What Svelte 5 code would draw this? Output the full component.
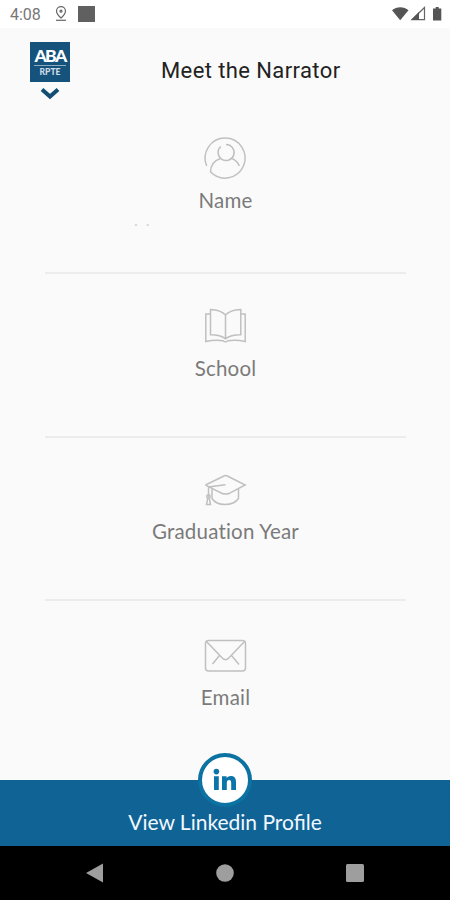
<script>
  let time = '4:08';

  const fields = [
    { id: 'name', label: 'Name', value: '. .' },
    { id: 'school', label: 'School', value: '' },
    { id: 'year', label: 'Graduation Year', value: '' },
    { id: 'email', label: 'Email', value: '' }
  ];
</script>

<div class="screen">
  <div class="status-bar">
    <span class="time">{time}</span>
    <svg class="pin" width="12" height="16" viewBox="0 0 12 16">
      <path d="M6 12C3.200 9.400 1.500 7.400 1.500 5.200a4.500 4.500 0 0 1 9 0C10.500 7.400 8.800 9.400 6 12z" />
      <circle cx="6" cy="5.200" r="1" />
      <path d="M1 14.300h10" />
    </svg>
    <span class="square"></span>
    <svg class="signals" width="50" height="16" viewBox="0 0 50 16">
      <path d="M0 4.200C4.500.3 12 .3 16.500 4.200L8.200 14.200z" />
      <path d="M32.500 1.500v12.200H20z" fill="none" stroke="#666" stroke-width="1.200" />
      <path d="M19 14L27 6v8z" />
      <path d="M41 2.500h2.700V1h3v1.500h2.600v12H41z" />
    </svg>
  </div>

  <header>
    <button class="logo" aria-label="Menu">
      <span class="logo-box">
        <span class="logo-top">ABA</span>
        <span class="logo-sub">RPTE</span>
      </span>
      <svg width="20" height="13" viewBox="0 0 20 13">
        <path d="M2 2.500l8 7 8-7" />
      </svg>
    </button>
    <h1>Meet the Narrator</h1>
  </header>

  <main>
    {#each fields as field}
      <section class={field.id}>
        <svg class="icon" width="42" height="42" viewBox="0 0 42 42">
          {#if field.id === 'name'}
            <path d="M2.700 29A20 20 0 1 1 6.500 34.800C6.800 28 10.500 23.500 16 21.700" />
            <path d="M16.800 9.500a8 8 0 1 0 5.200-2" />
            <path d="M28 21.500c3.500 1.500 6 4 7.300 7.500" />
          {:else if field.id === 'school'}
            <path d="M21.500 10C18.500 6.500 13 4.800 6.500 4.500v25.300C12.500 29.800 18 31 21.500 33.800 25 31 30.500 29.800 36.800 29.800V4.500C30.500 4.800 24.500 6.500 21.500 10zM21.500 10v23.800" />
            <path d="M6.500 9H1.800v27.500c6-1.300 12.500-1.600 17.200-.8q2.500 2.200 5 0c4.500-.8 11.500-.5 17.200.8V9h-4.400" />
          {:else if field.id === 'year'}
            <path d="M1.500 16L20.500 6.800q1.200-.5 2.400 0L41.200 16l-15.500 8.200q-4 1.800-8 0L5 17.800 1.500 16M21.500 15.800L4.500 18v10.500" />
            <path d="M8 20v9.500c5 8 21 8 26.500 0V20" />
            <circle cx="4.500" cy="27.500" r="1.700" />
            <path d="M3.800 29L2.500 35.500h4L5.200 29" />
          {:else}
            <rect x="1.500" y="5.500" width="40" height="30.500" rx="3" />
            <path d="M2.500 6.500L18.500 23.300q3 2.800 6 0L40.500 6.500M15.500 20.500L8.500 29M27.500 20.500l7.500 9" />
          {/if}
        </svg>
        <h2>{field.label}</h2>
        {#if field.value}
          <p>{field.value}</p>
        {/if}
      </section>
    {/each}
  </main>

  <footer>
    <div class="badge">
      <svg width="24" height="24" viewBox="0 0 24 24">
        <circle cx="3.400" cy="3.600" r="2.800" />
        <path d="M1 8.200h4.800v13.800H1zM9 8.200h4.600v1.900c1-1.500 2.500-2.200 4.300-2.200 3.800 0 5.100 2.400 5.100 6.200V22h-4.800v-7c0-1.900-.5-3-2-3-1.700 0-2.400 1.200-2.400 3v7H9z" />
      </svg>
    </div>
    <span>View Linkedin Profile</span>
  </footer>

  <nav>
    <svg width="20" height="20" viewBox="0 0 20 20"><path d="M18 .5v19L1 10z" /></svg>
    <svg width="18" height="18" viewBox="0 0 18 18"><circle cx="9" cy="9" r="8.800" /></svg>
    <svg width="20" height="20" viewBox="0 0 20 20"><rect x="1" y="1" width="18" height="18" rx="1.500" /></svg>
  </nav>
</div>

<style>
  :global(body) {
    margin: 0;
  }
  .screen {
    display: flex;
    flex-direction: column;
    width: 450px;
    height: 900px;
    overflow: hidden;
    background: #fafafa;
    font-family: Lato, sans-serif;
  }
  .status-bar {
    display: flex;
    align-items: center;
    box-sizing: border-box;
    height: 28px;
    padding: 0 8px 0 10px;
    background: #fff;
    color: #777;
    font-family: Roboto, sans-serif;
  }
  .time {
    width: 45px;
    font-size: 16px;
    line-height: 28px;
    padding-top: 2px;
  }
  .pin {
    fill: none;
    stroke: #666;
    stroke-width: 1.2;
  }
  .square {
    width: 17px;
    height: 16px;
    margin-left: 11px;
    background: #606060;
  }
  .signals {
    margin-left: auto;
    fill: #555;
  }
  header {
    display: flex;
    height: 78px;
  }
  .logo {
    display: flex;
    flex-direction: column;
    align-items: center;
    width: 40px;
    margin: 14px 0 0 30px;
    padding: 0;
    border: none;
    background: none;
  }
  .logo svg {
    margin-top: 5px;
    fill: none;
    stroke: #124e74;
    stroke-width: 4;
  }
  .logo-box {
    display: flex;
    flex-direction: column;
    align-items: center;
    width: 40px;
    height: 40px;
    background: #15537c;
    color: #fff;
    font-family: Lato, sans-serif;
    font-weight: 900;
  }
  .logo-top {
    width: 32px;
    height: 16px;
    margin-top: 7px;
    border-bottom: 1px solid #8eabc0;
    font-size: 17.5px;
    line-height: 14px;
    letter-spacing: -1.6px;
    text-align: center;
  }
  .logo-sub {
    margin-top: 1px;
    font-size: 8.5px;
    line-height: 10px;
    color: #cfdde7;
  }
  h1 {
    margin: 30px 0 0 91px;
    color: #222;
    font-family: Roboto, sans-serif;
    font-size: 22px;
    font-weight: 400;
    line-height: 26px;
    letter-spacing: 0.4px;
    white-space: nowrap;
  }
  main {
    flex: 1;
    padding: 0 44px 0 45px;
  }
  section {
    display: flex;
    flex-direction: column;
    align-items: center;
    box-sizing: border-box;
    height: 163.5px;
    padding-top: 31px;
    border-bottom: 2px solid #ececec;
  }
  section.name {
    height: 168px;
  }
  section.email {
    padding-top: 34px;
    border-bottom: none;
  }
  .icon {
    margin-right: 1px;
    overflow: visible;
    fill: none;
    stroke: #c0c0c0;
    stroke-width: 1.5;
  }
  h2 {
    margin: 7px 0 0;
    color: #7a7a7a;
    font-size: 20.5px;
    font-weight: 400;
    line-height: 26px;
    letter-spacing: 0.2px;
  }
  .name h2,
  .school h2 {
    margin-top: 8px;
  }
  p {
    align-self: flex-start;
    margin: -3px 0 0 89px;
    color: #d0d0d0;
    font-size: 16px;
    line-height: 20px;
    word-spacing: 4px;
  }
  footer {
    position: relative;
    display: flex;
    justify-content: center;
    height: 66px;
    background: #106395;
    color: #f2f8ff;
    font-size: 21px;
    line-height: 26px;
  }
  footer span {
    margin-top: 29px;
  }
  .badge {
    position: absolute;
    top: -27px;
    left: 198px;
    display: flex;
    align-items: center;
    justify-content: center;
    box-sizing: border-box;
    width: 54px;
    height: 54px;
    border: 4px solid #0b72a1;
    border-radius: 50%;
    background: #fff;
  }
  .badge svg {
    fill: #0b74a8;
  }
  nav {
    display: flex;
    align-items: center;
    justify-content: space-between;
    box-sizing: border-box;
    height: 54px;
    padding: 0 85px;
    background: #000;
    fill: #9e9e9e;
  }
</style>
